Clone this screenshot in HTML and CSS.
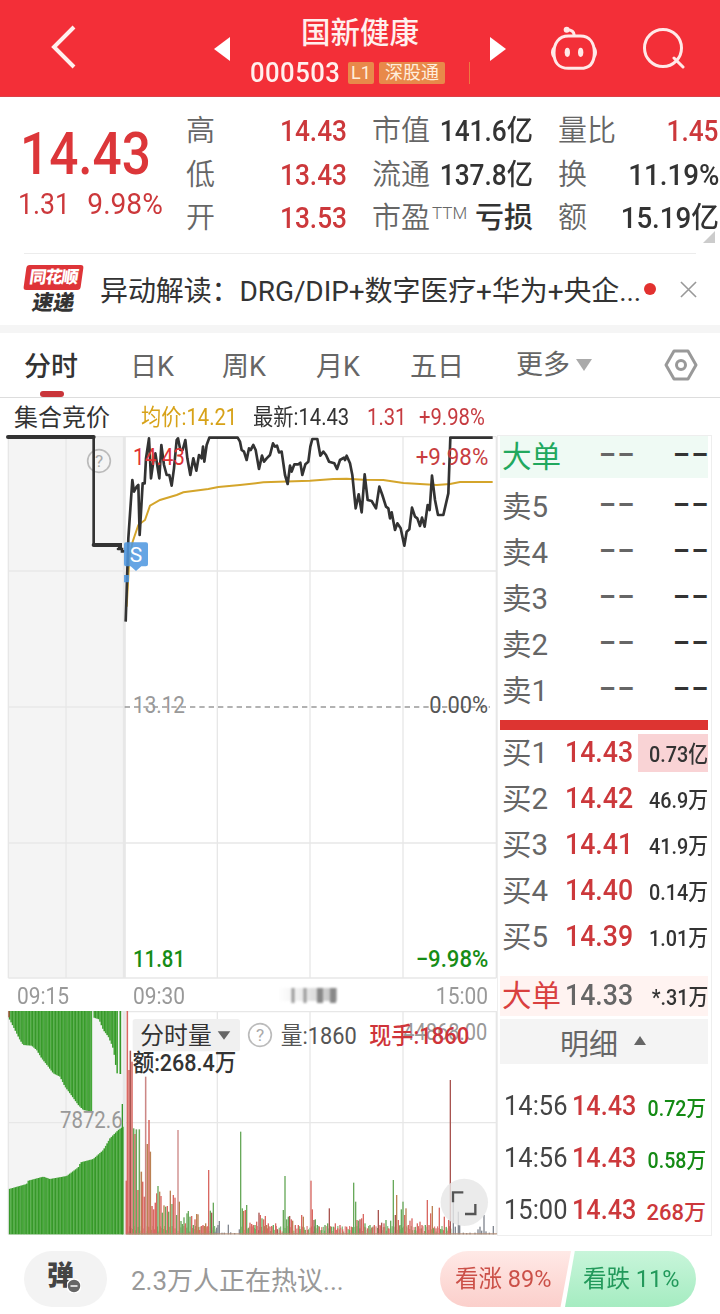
FILE: index.html
```html
<!DOCTYPE html>
<html lang="zh-CN">
<head>
<meta charset="utf-8">
<title>国新健康 000503</title>
<link rel="stylesheet" href="styles.css">
</head>
<body>
<header class="top">
  <svg class="back" viewBox="0 0 28 46"><path d="M24 3 4 23 24 43"/></svg>
  <svg class="tri prev" viewBox="0 0 16 24"><path d="M16 0V24L0 12Z"/></svg>
  <div class="title">
    <h1>国新健康</h1>
    <div class="code"><span class="digits">000503</span><span class="badge l1">L1</span><span class="badge sgt">深股通</span><i></i></div>
  </div>
  <svg class="tri next" viewBox="0 0 16 24"><path d="M0 0V24L16 12Z"/></svg>
  <svg class="robot" viewBox="570 78 144 134">
    <path d="M625 108H661C690 108 703 130 703 158C703 187 690 205 661 205H625C596 205 582 187 582 158C582 130 596 108 625 108ZM643 106C642 94 634 89 621 89"/>
    <path class="solid" d="M582 139C570 145 570 169 582 176ZM702 139C714 145 714 169 702 176Z"/>
    <circle class="solid" cx="620" cy="89" r="9"/><ellipse class="solid" cx="622" cy="157" rx="8" ry="14"/><ellipse class="solid" cx="662" cy="157" rx="8" ry="14"/>
  </svg>
  <svg class="search" viewBox="0 0 42 42"><circle cx="20" cy="20" r="18.5"/><path d="M31 30 40 39"/></svg>
</header>

<section class="quote">
  <div class="now"><div class="price">14.43</div><div class="change"><span>1.31</span><span>9.98%</span></div></div>
  <div class="stats">
    <div><label>高</label><b class="red">14.43</b></div><div><label>市值</label><b>141.6亿</b></div><div><label>量比</label><b class="red">1.45</b></div>
    <div><label>低</label><b class="red">13.43</b></div><div><label>流通</label><b>137.8亿</b></div><div><label>换</label><b class="wide">11.19%</b></div>
    <div><label>开</label><b class="red">13.53</b></div><div><label>市盈<sup>TTM</sup></label><b class="cjk">亏损</b></div><div><label>额</label><b class="wide">15.19亿</b></div>
  </div>
  <svg class="corner" viewBox="0 0 12 12"><path d="M12 0V12H0Z"/></svg>
</section>

<section class="news">
  <div class="logo"><span class="logo-top">同花顺</span><span class="logo-bottom">速递</span></div>
  <p>异动解读：DRG/DIP+数字医疗+华为+央企...</p>
  <span class="dot"></span>
  <svg class="close" viewBox="0 0 18 18"><path d="M1 1 17 17M17 1 1 17"/></svg>
</section>

<nav class="tabs">
  <a class="active">分时</a><a>日K</a><a>周K</a><a>月K</a><a>五日</a><a class="more">更多<svg viewBox="0 0 16 12"><path d="M0 0H16L8 12Z"/></svg></a>
  <svg class="setting" viewBox="0 0 34 32"><path d="M10 2H24L32 16 24 30H10L2 16Z"/><circle cx="17" cy="16" r="4.5"/></svg>
</nav>

<main class="board">
  <section class="charts">
    <div class="legend"><span class="auction">集合竞价</span><span class="avg">均价:14.21</span><span class="last">最新:14.43</span><span class="diff">1.31</span><span class="pct">+9.98%</span></div>
    <svg class="price-chart" viewBox="0 30 1491 1632">
      <rect x="25" y="35" width="347" height="1624" fill="#f4f4f4"/>
      <g class="grid"><path d="M25 35V1659M198 35V1659M652 35V1659M930 35V1659M1209 35V1659M1489 35V1659M25 35H1489M25 438H1489M25 846H372M25 1254H1489M25 1659H1489"/><path stroke-width="9" d="M373 35V1659"/></g>
      <path class="zero" d="M374 846H1470"/>
      <g class="label">
        <text x="399" y="863" textLength="156" lengthAdjust="spacingAndGlyphs" fill="#999">13.12</text>
        <text x="1288" y="863" textLength="176" lengthAdjust="spacingAndGlyphs" fill="#555">0.00%</text>
        <text class="mid" x="399" y="1626" textLength="156" lengthAdjust="spacingAndGlyphs" fill="#168c16">11.81</text>
        <text class="mid" x="1247" y="1626" textLength="218" lengthAdjust="spacingAndGlyphs" fill="#168c16">−9.98%</text>
      </g>
      <g class="help"><circle cx="297" cy="108" r="34"/><text x="297" y="126" text-anchor="middle">?</text></g>
      <path class="avg-line" d="M380 545 388 400 398 350 415 300 435 285 450 242 480 225 530 210 550 202 625 192 655 186 720 180 790 172 930 167 1000 162 1040 161 1090 164 1150 165 1210 174 1310 180 1350 177 1380 171 1478 171"/>
      <path class="auction-line" d="M24 36H281"/>
      <path class="auction-line drop" d="M281 36V360"/>
      <path class="auction-line" d="M281 360H360V368"/>
      <path class="auction-line drop" d="M354 372H366V379H371"/>
      <path class="price-line" d="M377 590 380 500 385 340 397 165 402 200 410 185 415 180 419 330 428 175 434 175 438 100 447 40 453 160 460 110 466 85 478 160 484 60 492 120 500 150 508 150 515 182 522 130 530 45 534 40 541 75 548 75 556 45 562 100 571 150 580 100 589 137 597 90 605 100 609 65 613 110 620 60 628 38H713L720 50 725 75 732 80 740 105 747 70 752 75 760 60 767 75 777 132 786 92 792 110 800 100 810 90 819 55 825 65 831 62 837 82 845 80 855 150 863 177 870 122 875 140 883 118 895 118 901 113 907 150 916 118 925 110 931 65 937 42H952L961 92 970 80 978 90 987 110 1003 115 1011 132 1020 105 1032 98 1035 105 1040 92 1050 115 1057 150 1067 250 1076 208 1085 262 1094 148 1103 225 1115 228 1128 250 1138 185 1147 210 1158 245 1165 250 1170 280 1175 262 1185 315 1192 295 1202 310 1213 362 1220 320 1228 313 1236 248 1245 275 1252 280 1260 303 1266 278 1274 305 1283 240 1289 255 1296 152 1305 225 1314 270 1330 270 1345 205 1351 38H1478"/>
      <g class="label">
        <text x="399" y="120" textLength="156" lengthAdjust="spacingAndGlyphs" fill="#df3436">14.43</text>
        <text x="1247" y="120" textLength="218" lengthAdjust="spacingAndGlyphs" fill="#c83d40">+9.98%</text>
      </g>
      <path class="signal" d="M378 352H438Q444 352 444 358V418Q444 424 438 424H424L408 438 392 424H378Q372 424 372 418V358Q372 352 378 352ZM372 450H387V472H372Z"/>
      <text class="signal-text" x="408" y="410" text-anchor="middle">S</text>
    </svg>
    <div class="axis"><span>09:15</span><span class="mid">09:30</span><svg class="smudge" viewBox="0 0 64 22">
      <defs><linearGradient id="sm"><stop offset="0" stop-color="#ddd" stop-opacity="0"/><stop offset="1" stop-color="#bbb"/></linearGradient></defs>
      <rect x="0" y="2" width="60" height="13" fill="url(#sm)"/><path d="M16 2V17M28 2V17" stroke="#999" stroke-width="3"/><path d="M43 2V17M56 2V17" stroke="#888" stroke-width="6"/></svg><span class="end">15:00</span></div>
    <svg class="volume-chart" viewBox="0 243 1491 672">
      <rect x="25" y="243" width="347" height="670" fill="#f4f4f4"/>
      <g class="grid"><path d="M25 243V913M198 243V913M652 243V913M930 243V913M1209 243V913M1489 243V913M25 245H1489M25 578H1489M25 913H1489"/><path stroke-width="9" d="M373 243V913"/></g>
      <g id="bars"></g>
      <rect x="398" y="267" width="322" height="97" rx="8" fill="#f0f0f0"/>
      <g class="label">
        <text x="180" y="595" textLength="188" lengthAdjust="spacingAndGlyphs" fill="#999">7872.6</text>
        <text x="1210" y="330" textLength="252" lengthAdjust="spacingAndGlyphs" fill="#999">44868.00</text>
        <text x="421" y="343" textLength="214" lengthAdjust="spacingAndGlyphs" fill="#333">分时量</text>
        <text class="mid" x="398" y="424" textLength="311" lengthAdjust="spacingAndGlyphs" fill="#333">额:268.4万</text>
        <text x="842" y="343" textLength="228" lengthAdjust="spacingAndGlyphs" fill="#555">量:1860</text>
        <text class="mid" x="1108" y="343" textLength="300" lengthAdjust="spacingAndGlyphs" fill="#cf3439">现手:1860</text>
      </g>
      <path d="M653 304H691L672 329Z" fill="#666"/>
      <g class="help"><circle cx="780" cy="315" r="34"/><text x="780" y="333" text-anchor="middle">?</text></g>
      <circle cx="1393" cy="817" r="71" fill="#e6e6e6" fill-opacity=".82"/>
      <path class="expand" d="M1359 817V787H1390M1426 822V852H1395"/>
    </svg>
  </section>

  <section class="book">
    <div class="row big sell"><span>大单</span><em>--</em><em class="dark">--</em></div>
    <div class="row"><span>卖5</span><em>--</em><em class="dark">--</em></div>
    <div class="row"><span>卖4</span><em>--</em><em class="dark">--</em></div>
    <div class="row"><span>卖3</span><em>--</em><em class="dark">--</em></div>
    <div class="row"><span>卖2</span><em>--</em><em class="dark">--</em></div>
    <div class="row"><span>卖1</span><em>--</em><em class="dark">--</em></div>
    <div class="ratio"></div>
    <div class="row"><span>买1</span><b>14.43</b><i class="hot"><u>0.73亿</u></i></div>
    <div class="row"><span>买2</span><b>14.42</b><i><u>46.9万</u></i></div>
    <div class="row"><span>买3</span><b>14.41</b><i><u>41.9万</u></i></div>
    <div class="row"><span>买4</span><b>14.40</b><i><u>0.14万</u></i></div>
    <div class="row"><span>买5</span><b>14.39</b><i><u>1.01万</u></i></div>
    <div class="row big buy"><span>大单</span><b class="gray">14.33</b><i><u>*.31万</u></i></div>
    <div class="detail">明细<svg viewBox="0 0 12 9"><path d="M0 9H12L6 0Z"/></svg></div>
    <div class="ticks">
      <div class="tick"><span>14:56</span><b>14.43</b><i class="green">0.72万</i></div>
      <div class="tick"><span>14:56</span><b>14.43</b><i class="green">0.58万</i></div>
      <div class="tick"><span>15:00</span><b>14.43</b><i class="red total">268万</i></div>
    </div>
  </section>
</main>

<footer class="bottom">
  <div class="barrage"><span>弹</span><svg viewBox="0 0 14 14"><circle cx="7" cy="7" r="7"/><path d="M3.5 7H10.5"/></svg></div>
  <p>2.3万人正在热议...</p>
  <div class="vote up"><span>看涨 89%</span></div><div class="vote down"><span>看跌 11%</span></div>
</footer>
<script src="chart.js"></script>
</body>
</html>
```
FILE: styles.css
```css
* { box-sizing: border-box; }
body { margin: 0; width: 720px; height: 1314px; overflow: hidden; background: #fff; color: #333; font-family: Roboto, "Noto Sans CJK SC", sans-serif; }
svg { display: block; flex: none; }
em, i { font-style: normal; }
u { text-decoration: none; }
.red { color: #cc383b; }
.green { color: #148a14; }

.top { height: 97px; background: #f32f38; display: flex; align-items: flex-start; color: #fff; border-bottom: 1px solid #dc4047; }
.back { width: 28px; height: 46px; margin: 24px 0 0 50px; fill: none; stroke: #fff0ee; stroke-width: 4; }
.tri { width: 16px; height: 24px; margin-top: 37px; fill: #fff; }
.prev { margin-left: 136px; }
.title { width: 260px; height: 96px; padding-top: 17px; }
.title h1 { margin: 0; font-size: 29.5px; line-height: 32px; font-weight: 500; text-align: center; color: #fff0ee; }
.code { display: flex; height: 22px; margin-top: 13px; padding-left: 20px; align-items: center; color: #fff0ee; }
.digits { width: 90px; font-size: 27px; line-height: 24px; font-weight: 500; letter-spacing: .5px; transform: scaleX(.95); transform-origin: left; }
.badge { height: 22px; background: #e8894a; border-radius: 2px; font-size: 18px; line-height: 22px; text-align: center; color: #ffeedc; }
.l1 { width: 26px; margin-left: 8px; }
.sgt { width: 66px; margin-left: 5px; }
.code i { width: 1px; height: 22px; margin-left: 24px; background: #ee7a40; }
.robot { width: 48px; height: 44.7px; margin: 26px 0 0 44px; fill: none; stroke: #ffe9e8; stroke-width: 9; stroke-linecap: round; }
.robot .solid { fill: #ffe9e8; stroke: none; }
.search { width: 42px; height: 42px; margin: 28px 0 0 45px; fill: none; stroke: #ffe9e8; stroke-width: 3; stroke-linecap: round; }

.quote { height: 156px; display: flex; position: relative; overflow: hidden; }
.now { width: 186px; padding: 27px 0 0 20px; color: #dc3639; }
.price { font-size: 59px; line-height: 60px; font-weight: 500; transform: scaleX(.87); transform-origin: left; }
.change { display: flex; justify-content: space-between; width: 148px; margin-left: -2px; font-size: 29px; line-height: 40px; color: #cc383b; }
.change span { transform: scaleX(.92); transform-origin: left; }
.change span:last-child { transform: scaleX(.97); transform-origin: right; margin-right: 3px; }
.stats { display: grid; grid-template-columns: 161px 161px 161px; column-gap: 25px; grid-auto-rows: 43.5px; padding-top: 13px; }
.stats div { display: flex; justify-content: space-between; align-items: center; white-space: nowrap; line-height: 43px; }
.stats label { font-size: 29px; color: #666; font-weight: 350; }
.stats sup { font-size: 17px; line-height: 0; vertical-align: 9px; margin-left: 2px; }
.stats b { font-size: 29px; font-weight: 500; transform: scaleX(.905); transform-origin: right; }
.stats .wide { transform: scaleX(.955); }
.stats .cjk { transform: none; }
.corner { position: absolute; right: 5px; top: 134px; width: 12px; height: 12px; fill: #ccc; }

.news { height: 80px; display: flex; align-items: center; border-bottom: 8px solid #f5f5f5; background: linear-gradient(#ececec, #ececec) 24px 0 / 672px 1px no-repeat; padding-left: 25px; }
.logo { width: 75px; height: 50px; padding-top: 1px; }
.logo-top { display: block; width: 57px; height: 25px; border-radius: 3px; background: #de3438; color: #fff; font-size: 17px; font-weight: 900; line-height: 24px; text-align: center; transform: skewX(-8deg); letter-spacing: -1px; }
.logo-bottom { display: block; width: 57px; font-size: 21px; line-height: 27px; font-weight: 900; text-align: center; transform: skewX(-10deg); color: #333; }
.news p { margin: 5px 0 0; width: 544px; font-size: 28px; line-height: 40px; white-space: nowrap; letter-spacing: -.1px; }
.dot { width: 12px; height: 12px; border-radius: 50%; background: #e2312f; }
.close { width: 17px; height: 17px; margin-left: 24px; stroke: #999; stroke-width: 1.7; fill: none; }

.tabs { height: 65px; display: flex; border-bottom: 1px solid #ddd; padding-left: 24px; font-size: 27px; line-height: 69px; color: #666; }
.tabs a { width: 94px; position: relative; white-space: nowrap; }
.tabs .active { width: 106px; height: 64px; color: #333; font-weight: 500; }
.tabs .active::after { content: ""; position: absolute; left: 16px; bottom: 0; width: 24px; height: 6px; border-radius: 3px; background: #c9353a; }
.tabs a:nth-child(2) { width: 92px; }
.tabs a:nth-child(5) { width: 106px; }
.tabs .more { width: 148px; height: 64px; display: flex; align-items: center; }
.more svg { width: 16px; height: 12px; margin-left: 6px; fill: #aaa; }
.setting { width: 34px; height: 32px; margin-top: 16px; fill: none; stroke: #999; stroke-width: 3; stroke-linejoin: round; }

.board { display: flex; height: 837px; }
.charts { width: 497px; }
.legend { display: flex; height: 37px; line-height: 40px; font-size: 23px; padding-left: 14px; white-space: nowrap; }
.legend span { transform: scaleX(.88); transform-origin: left; }
.legend .auction { width: 127px; font-size: 24px; transform: none; }
.legend .avg { width: 112px; color: #d7a218; }
.legend .last { width: 114px; }
.legend .diff { width: 52px; color: #c63b40; }
.legend .pct { width: 70px; color: #c63b40; }
.price-chart { width: 497px; height: 544px; }
.grid { fill: none; stroke: #e7e7e7; stroke-width: 4; }
.zero { stroke: #999; stroke-width: 4; stroke-dasharray: 16 12; }
.label { font-size: 70px; font-weight: 400; }
.label .mid { font-weight: 500; }
.help circle { fill: none; stroke: #bbb; stroke-width: 5; }
.help text { font-size: 52px; fill: #aaa; }
.avg-line { fill: none; stroke: #d4a52b; stroke-width: 6; }
.auction-line { fill: none; stroke: #333; stroke-width: 12; stroke-linecap: round; }
.auction-line.drop { stroke-width: 8; }
.price-line { fill: none; stroke: #333; stroke-width: 8; stroke-linejoin: round; }
.signal { fill: #4d96e0; fill-opacity: .86; }
.signal-text { font-size: 63px; fill: #fff; }
.axis { height: 32px; display: flex; padding-left: 17px; color: #999; font-size: 23px; line-height: 35px; }
.axis span { width: 116px; transform: scaleX(.91); transform-origin: left; }
.axis .mid { width: 144px; }
.smudge { width: 64px; height: 22px; margin-top: 7px; filter: blur(1px); }
.axis .end { width: 147px; text-align: right; transform-origin: right; }
.volume-chart { width: 497px; height: 224px; }
.expand { fill: none; stroke: #555; stroke-width: 7; }

.book { width: 215px; height: 801px; margin-top: 37px; padding: 0 3px 0 2px; border: 1px solid #eee; }
.row { height: 46px; display: flex; align-items: center; font-size: 29.5px; line-height: 46px; padding-left: 2px; color: #666; white-space: nowrap; }
.row span { width: 63px; margin-top: -1px; }
.row b { width: 73px; margin-top: -2px; font-size: 30px; font-weight: 500; color: #cc383b; transform: scaleX(.89); transform-origin: left; }
.row .gray { color: #666; }
.row i { flex: 1; height: 38px; line-height: 40px; font-size: 22.5px; color: #333; display: flex; justify-content: flex-end; }
.row i u { transform: scaleX(.88); transform-origin: right; font-weight: 500; }
.row .hot { background: #f9d3d5; }
.row em { width: 28px; margin-right: 46px; font-size: 34px; line-height: 36px; letter-spacing: .8px; transform: translate(34px, -4px) scaleX(1.5); transform-origin: left; font-weight: 500; }
.row .dark { color: #333; margin-right: 0; }
.big { height: 42px; }
.big.sell { background: #effaf4; margin-bottom: 6px; }
.sell span { color: #21a85e; }
.ratio { height: 10px; background: #dd3431; margin: 6px 0 0; }
.big.buy { height: 40px; margin-top: 16px; background: #fff3f1; }
.buy span { color: #d9403f; }
.detail { height: 45px; margin-top: 3px; background: #f4f4f4; display: flex; align-items: center; justify-content: center; font-size: 29px; color: #666; }
.detail svg { width: 12px; height: 9px; margin: -3px 2px 0 16px; fill: #666; }
.ticks { padding: 15px 2px 0 4px; }
.tick { height: 52px; display: flex; align-items: center; font-size: 28px; white-space: nowrap; color: #444; }
.tick span { width: 68px; transform: scaleX(.91); transform-origin: left; }
.tick b { width: 64px; font-weight: 500; color: #cc383b; transform: scaleX(.9); transform-origin: left; }
.tick i { flex: 1; font-size: 22px; text-align: right; transform: scaleX(.89); transform-origin: right; font-weight: 500; padding-top: 2px; }
.tick .total { transform: scaleX(1); }

.bottom { height: 79px; padding: 16px 24px 0; display: flex; }
.barrage { width: 83px; height: 56px; border-radius: 28px; background: #f3f3f3; padding: 0 0 0 23px; font-size: 27px; line-height: 50px; font-weight: 900; display: flex; color: #444; }
.barrage svg { width: 14px; height: 14px; margin: 28px 0 0 -7px; fill: #666; stroke: #fff; stroke-width: 1.5; }
.bottom p { width: 309px; margin: 0 0 0 24px; font-size: 26px; line-height: 60px; color: #999; white-space: nowrap; }
.vote { height: 56px; font-size: 24px; line-height: 57px; white-space: nowrap; }
.vote span { display: block; transform: scaleX(.98); transform-origin: left; }
.up { width: 131px; padding-left: 15px; border-radius: 28px 0 0 28px; color: #cb5048; background: linear-gradient(#ffe9e6, #fbcfcb); clip-path: polygon(0 0, 100% 0, 92% 100%, 0 100%); }
.down { width: 131px; margin-left: -6px; padding-left: 18px; border-radius: 0 28px 28px 0; color: #22995b; background: linear-gradient(#c8f5da, #a5ecc1); clip-path: polygon(7.5% 0, 100% 0, 100% 100%, 0 100%); }
```
FILE: chart.js
```javascript
const layer = document.getElementById('bars');
const BASE = 913;
function bar(x, y1, y2, color, width) {
  const r = document.createElementNS('http://www.w3.org/2000/svg', 'rect');
  r.setAttribute('x', x - width / 2);
  r.setAttribute('y', y1);
  r.setAttribute('width', width);
  r.setAttribute('height', y2 - y1);
  r.setAttribute('fill', color);
  layer.appendChild(r);
}
function level(points, x) {
  for (let i = 1; i < points.length; i++) {
    const [x0, y0] = points[i - 1], [x1, y1] = points[i];
    if (x <= x1) return y0 + (y1 - y0) * (x - x0) / (x1 - x0);
  }
  return points[points.length - 1][1];
}
// Call auction: unmatched volume hangs from the top, matched volume rises from the base.
const unmatched = [[27,265],[40,290],[60,330],[70,345],[95,347],[110,360],[125,385],[145,410],[160,430],[180,440],[195,470],[210,490],[235,525],[250,540],[276,545]];
const late = [[279,262],[297,268],[310,300],[325,320],[338,350],[345,385],[350,430],[354,430]];
const matched = [[27,777],[80,762],[85,752],[130,740],[150,747],[200,738],[235,712],[242,697],[280,687],[310,660],[330,625],[355,600],[369,590]];
const greens = ['#37982a', '#45a738'];
let n = 0;
for (let x = 29; x < 370; x += 4.3, n++) {
  const c = greens[n % 2];
  if (x < 276) bar(x, 243, level(unmatched, x), c, 4.8);
  else if (x > 279 && x < 353) bar(x, 243, level(late, x), c, 4.8);
  bar(x, level(matched, x), BASE, c, 4.8);
}
bar(361, 243, 432, greens[0], 5);
bar(367, 522, BASE, greens[0], 4);
bar(27, 243, 262, '#a04a30', 4);

// Minute volume: x, top, colour key.
const minute = `379,752,r 382,243,r 387,420,r 391,362,d 396,395,r 401,595,g 405,612,r 409,598,g 414,780,r 418,598,g 424,725,o 428,755,r 433,800,r 437,440,p 442,642,o 447,570,r 451,665,o 456,828,r 461,838,r 466,818,r 470,790,r 474,768,g 479,785,o 483,798,r 487,848,g 492,826,o 497,830,g 502,828,r 506,845,g 511,782,o 516,822,g 520,795,r 525,803,r 530,855,g 534,600,p 538,815,o 543,873,g 547,882,g 552,862,g 556,880,r 561,850,g 565,843,g 570,860,g 575,858,r 580,885,g 585,868,r 590,852,o 594,853,o 599,900,r 604,888,r 609,885,r 613,888,o 617,880,o 621,890,r 626,720,r 631,842,g 635,848,d 640,818,g 645,905,k 650,893,k 654,885,k 658,873,k 666,908,k 673,908,k 685,884,k 692,907,k 704,909,k 718,898,k 722,605,g 727,835,g 731,843,o 736,840,r 740,825,g 745,895,g 750,878,r 755,882,r 760,885,r 765,885,g 770,875,r 777,848,d 781,855,r 786,865,g 791,868,r 796,858,r 800,885,o 805,880,r 810,890,r 815,888,r 820,885,g 827,880,r 832,898,d 841,900,r 850,840,g 855,738,g 860,868,g 865,860,g 869,858,d 874,868,r 878,872,o 886,885,r 895,885,r 900,897,g 905,855,r 910,860,o 915,900,g 923,900,r 933,752,r 937,838,r 942,870,d 946,868,g 952,885,g 958,890,r 965,900,g 975,885,g 983,880,g 988,835,d 995,890,g 1006,880,r 1013,895,r 1020,885,r 1028,898,r 1040,890,r 1048,900,g 1054,890,r 1061,758,g 1067,815,g 1071,870,r 1075,872,g 1080,868,d 1085,865,r 1090,852,r 1095,880,g 1103,895,r 1110,885,g 1117,892,r 1123,885,r 1135,840,d 1140,885,r 1145,878,d 1152,880,r 1158,870,g 1165,895,r 1172,872,g 1180,750,g 1186,855,d 1190,795,o 1195,870,r 1200,885,g 1204,838,g 1209,815,g 1214,855,r 1218,835,o 1225,885,r 1230,872,r 1236,865,r 1245,900,g 1252,880,r 1260,875,r 1266,885,r 1276,885,g 1282,810,r 1287,885,r 1292,850,r 1297,828,o 1301,895,g 1308,895,r 1318,833,r 1326,898,g 1333,860,r 1340,895,g 1346,870,r 1351,450,d 1360,805,k 1366,890,k 1375,845,k 1379,885,k 1390,908,k 1400,909,k 1410,908,k 1425,908,k 1434,898,k 1440,890,k 1445,902,k 1452,855,k 1458,904,k 1468,908,k 1480,888,k`;
const palette = { r: '#d96862', g: '#68a95a', o: '#bb8153', p: '#cc8886', d: '#a85450', k: '#828790' };
for (let x = 380; x < 1353; x += 4.4) {
  if (x < 650 || x > 720) bar(x, BASE - 8 - Math.abs(Math.sin(x * 1.7)) * 17, BASE, Math.sin(x) > 0 ? palette.g : palette.r, 3);
}
for (const item of minute.split(' ')) {
  const [x, y, c] = item.split(',');
  bar(+x, +y, BASE, palette[c], x < 470 ? 4.6 : 4);
}
bar(936, 910, BASE, '#b08a70', 1110);
```
